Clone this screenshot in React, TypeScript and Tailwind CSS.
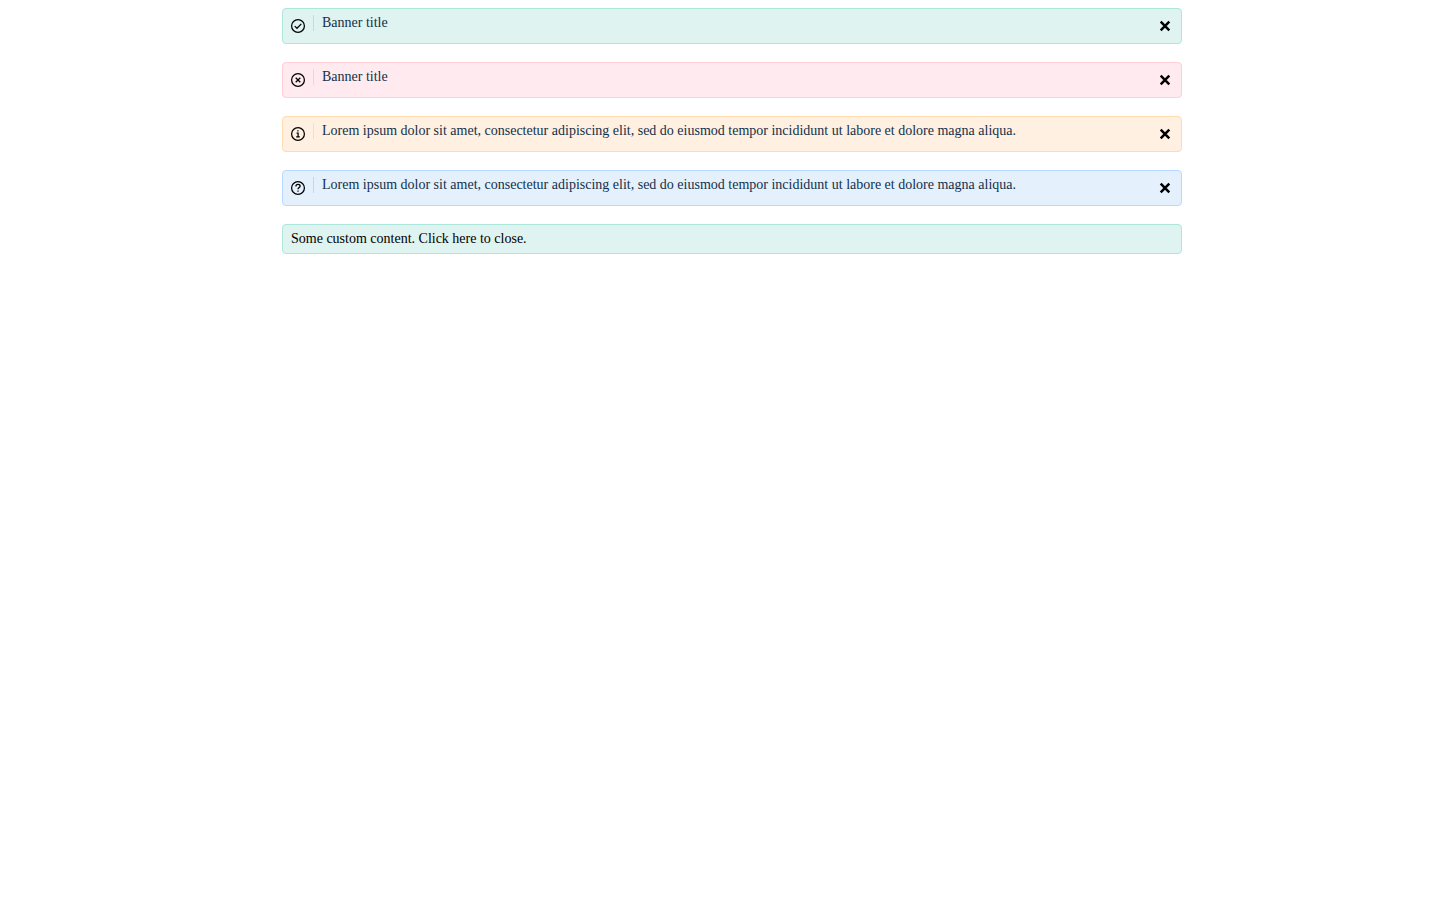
import { useState } from 'react';
import type { ReactNode } from 'react';

type Kind = 'success' | 'error' | 'warning' | 'info';

const boxTone: Record<Kind, string> = {
  success: 'border-[#ade7dc] bg-[#dff3f0]',
  error: 'border-[#ffcdd6] bg-[#ffebef]',
  warning: 'border-[#ffdbb0] bg-[#fff0e1]',
  info: 'border-[#b7d9fd] bg-[#e4f0fc]',
};

const ruleTone: Record<Kind, string> = {
  success: 'bg-[#ade7dc]',
  error: 'bg-[#ffcdd6]',
  warning: 'bg-[#ffdbb0]',
  info: 'bg-[#b7d9fd]',
};

const glyphs: Record<Kind, ReactNode> = {
  success: <path d="M5.7 9.1 8 11.3 12.3 6.9" />,
  error: <path d="M6.7 6.7 11.3 11.3M11.3 6.7 6.7 11.3" />,
  warning: <path d="M8.9 5.3V6.6M7.6 8.2H9.1V11.7M7.2 11.9H10.8" />,
  info: <path d="M6.9 7.4C6.9 6.1 7.8 5.4 9 5.4S11.1 6.1 11.1 7.2C11.1 8.5 9 8.6 9 10.3M9 11.4V12.7" />,
};

function StatusIcon({ kind }: { kind: Kind }) {
  return (
    <svg
      aria-hidden="true"
      viewBox="0 0 18 18"
      className="mt-2 size-[18px] shrink-0"
      fill="none"
      stroke="black"
      strokeWidth="1.25"
    >
      <circle cx="9" cy="9" r="6.4" />
      {glyphs[kind]}
    </svg>
  );
}

function Banner({ kind, children }: { kind: Kind; children: ReactNode }) {
  const [open, setOpen] = useState(true);
  if (!open) return null;
  return (
    <section className={`flex min-h-9 items-start rounded border px-1.5 ${boxTone[kind]}`}>
      <StatusIcon kind={kind} />
      <span className={`mt-1.5 ml-1.5 h-4 w-px shrink-0 ${ruleTone[kind]}`} />
      <p className="mt-1 ml-2 flex-1 text-sm text-[#12304a]">{children}</p>
      <button
        type="button"
        aria-label="Close banner"
        className="mt-2 mr-px flex size-[18px] shrink-0 cursor-pointer items-center justify-center"
        onClick={() => setOpen(false)}
      >
        <svg viewBox="0 0 18 18" className="size-[18px]" stroke="black" strokeWidth="2.5">
          <path d="M4.7 4.7 13.3 13.3M13.3 4.7 4.7 13.3" />
        </svg>
      </button>
    </section>
  );
}

function CustomBanner() {
  const [open, setOpen] = useState(true);
  if (!open) return null;
  return (
    <button
      type="button"
      className={`cursor-pointer rounded border px-2 py-1 text-left text-sm text-black ${boxTone.success}`}
      onClick={() => setOpen(false)}
    >
      Some custom content. Click here to close.
    </button>
  );
}

const lorem =
  'Lorem ipsum dolor sit amet, consectetur adipiscing elit, sed do eiusmod tempor incididunt ut labore et dolore magna aliqua.';

export default function App() {
  return (
    <main className="py-2 pl-4 font-['Liberation_Serif',serif]">
      <div className="mx-auto flex max-w-[900px] flex-col gap-[18px]">
        <Banner kind="success">Banner title</Banner>
        <Banner kind="error">Banner title</Banner>
        <Banner kind="warning">{lorem}</Banner>
        <Banner kind="info">{lorem}</Banner>
        <CustomBanner />
      </div>
    </main>
  );
}
